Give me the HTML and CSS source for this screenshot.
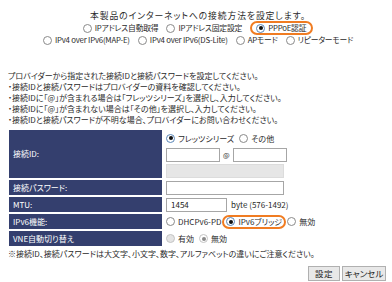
FILE: index.html
```html
<!DOCTYPE html>
<html lang="ja">
<head>
<meta charset="utf-8">
<link rel="stylesheet" href="styles.css">
</head>
<body>
<div class="page">
  <div class="mode">
    <p class="lead">本製品のインターネットへの接続方法を設定します。</p>
    <div class="opts">
      <label class="opt"><span class="radio"></span>IPアドレス自動取得</label>
      <label class="opt"><span class="radio"></span>IPアドレス固定設定</label>
      <label class="opt hl hl-top"><span class="radio on"></span>PPPoE認証</label>
    </div>
    <div class="opts">
      <label class="opt"><span class="radio"></span>IPv4 over IPv6(MAP-E)</label>
      <label class="opt"><span class="radio"></span>IPv4 over IPv6(DS-Lite)</label>
      <label class="opt"><span class="radio"></span>APモード</label>
      <label class="opt"><span class="radio"></span>リピーターモード</label>
    </div>
  </div>

  <div class="notes">
    <p>プロバイダーから指定された接続IDと接続パスワードを設定してください。</p>
    <p>・接続IDと接続パスワードはプロバイダーの資料を確認してください。</p>
    <p>・接続IDに「@」が含まれる場合は「フレッツシリーズ」を選択し、入力してください。</p>
    <p>・接続IDに「@」が含まれない場合は「その他」を選択し、入力してください。</p>
    <p>・接続IDと接続パスワードが不明な場合、プロバイダーにお問い合わせください。</p>
  </div>

  <table class="form">
    <tr class="r-id">
      <th>接続ID:</th>
      <td>
        <div class="line">
          <label class="opt"><span class="radio on"></span>フレッツシリーズ</label>
          <label class="opt"><span class="radio"></span>その他</label>
        </div>
        <div class="line idrow">
          <span class="inp w54"></span><span class="at">@</span><span class="inp w54"></span>
        </div>
        <div class="line idrow">
          <span class="inp w118 dis"></span>
        </div>
      </td>
    </tr>
    <tr>
      <th>接続パスワード:</th>
      <td><span class="inp w118"></span></td>
    </tr>
    <tr>
      <th>MTU:</th>
      <td><div class="line"><span class="inp w61">1454</span><span class="unit">byte (576-1492)</span></div></td>
    </tr>
    <tr>
      <th>IPv6機能:</th>
      <td>
        <div class="line tight">
          <label class="opt"><span class="radio"></span>DHCPv6-PD</label>
          <label class="opt hl hl-row"><span class="radio on"></span>IPv6ブリッジ</label>
          <label class="opt"><span class="radio"></span>無効</label>
        </div>
      </td>
    </tr>
    <tr>
      <th>VNE自動切り替え</th>
      <td>
        <div class="line">
          <label class="opt"><span class="radio dis"></span>有効</label>
          <label class="opt"><span class="radio dis on"></span>無効</label>
        </div>
      </td>
    </tr>
  </table>

  <p class="caution">※接続ID、接続パスワードは大文字、小文字、数字、アルファベットの違いにご注意ください。</p>

  <div class="actions">
    <button class="btn b-set" type="button">設定</button>
    <button class="btn b-cancel" type="button">キャンセル</button>
  </div>
</div>
</body>
</html>
```

FILE: styles.css
```css
* {
  box-sizing: border-box;
  margin: 0;
  padding: 0;
}

body {
  margin: 0;
  background: #fff;
  color: #2a2a2a;
  font-family: "Noto Sans CJK JP", "Noto Sans", sans-serif;
  font-size: 8px;
  font-feature-settings: "palt";
}

.page {
  width: 392px;
  padding: 10px 4px 0 8px;
}

.mode {
  text-align: center;
  line-height: 12px;
}

.lead {
  font-size: 8.8px;
  letter-spacing: 0.9px;
}

.opts {
  display: flex;
  justify-content: center;
  align-items: center;
  gap: 8px;
  height: 12px;
  font-size: 7.8px;
  letter-spacing: -0.2px;
}

.opt {
  display: inline-flex;
  align-items: center;
  gap: 3px;
  white-space: nowrap;
}

.radio {
  position: relative;
  flex: none;
  width: 9px;
  height: 9px;
  border: 1px solid #8a8a8a;
  border-radius: 50%;
  background: #fff;
}

.radio.on {
  border-color: #5a86b8;
}

.radio.on::after {
  content: "";
  position: absolute;
  left: 1.5px;
  top: 1.5px;
  width: 4px;
  height: 4px;
  border-radius: 50%;
  background: #111;
}

.radio.dis {
  border-color: #c4c4c4;
  background: #e4e4e4;
}

.radio.dis.on {
  background: #fff;
}

.radio.dis.on::after {
  background: #8a8a8a;
}

.hl {
  height: 14px;
  border: 2px solid #f07c22;
  border-radius: 7px;
}

.hl-top {
  padding: 0 5px 0 4px;
}

.hl-row {
  padding: 0 2px 0 2px;
}

.notes {
  margin-top: 24px;
  line-height: 11px;
}

.form {
  margin: 3px 0 0 1px;
  border-collapse: separate;
  border-spacing: 0 2px;
}

.form th {
  width: 153px;
  padding: 0 4px;
  background: #343f6e;
  color: #fff;
  text-align: left;
  font-weight: normal;
  height: 15px;
  line-height: 12px;
}

.form td {
  padding: 0 0 0 4px;
  vertical-align: middle;
}

.line {
  display: flex;
  align-items: center;
  gap: 5px;
  min-height: 15px;
}

.line.tight {
  gap: 1px;
}

.r-id .line:first-child {
  height: 16px;
}

.idrow {
  gap: 3px;
  margin-top: 2px;
  min-height: 14px;
}

.inp {
  display: block;
  height: 14px;
  border: 1px solid #a6a6a6;
  background: #fff;
  padding-left: 4px;
  line-height: 12px;
  color: #222;
}

.w54 { width: 54px; }
.w61 { width: 61px; }
.w118 { width: 118px; }

.inp.dis {
  background: #e6e6e6;
  border-color: #dcdcdc;
}

.at {
  font-size: 7px;
}

.unit {
  margin-left: -1px;
}

.caution {
  line-height: 12px;
}

.actions {
  display: flex;
  justify-content: flex-end;
  gap: 2px;
  margin-top: 6px;
  padding-right: 2px;
}

.btn {
  height: 15px;
  padding: 0;
  border: 1px solid #b0b0b0;
  background: #e8e8e8;
  color: #222;
  font-family: inherit;
  font-size: 8.5px;
  font-feature-settings: "palt";
  letter-spacing: 0.5px;
  line-height: 13px;
  text-align: center;
}

.b-set { width: 32px; }
.b-cancel { width: 44px; letter-spacing: 0; }
```
